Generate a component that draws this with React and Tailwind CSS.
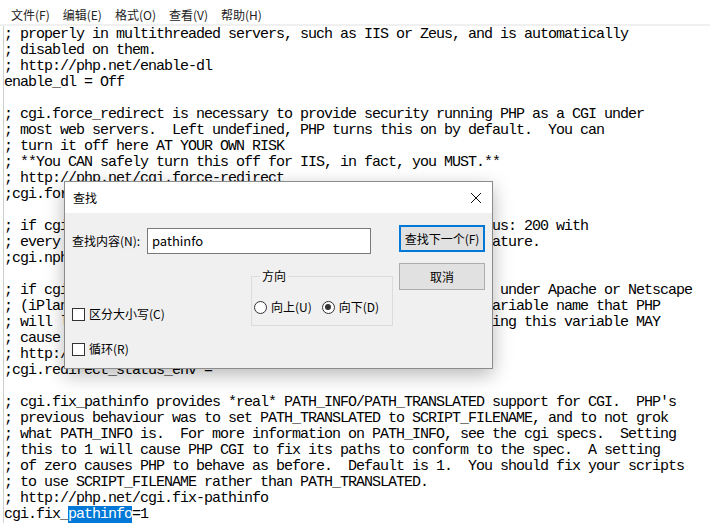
const lines = [
  "; properly in multithreaded servers, such as IIS or Zeus, and is automatically",
  "; disabled on them.",
  "; http://php.net/enable-dl",
  "enable_dl = Off",
  "",
  "; cgi.force_redirect is necessary to provide security running PHP as a CGI under",
  "; most web servers.  Left undefined, PHP turns this on by default.  You can",
  "; turn it off here AT YOUR OWN RISK",
  "; **You CAN safely turn this off for IIS, in fact, you MUST.**",
  "; http://php.net/cgi.force-redirect",
  ";cgi.force_redirect = 1",
  "",
  "; if cgi.nph is enabled it will force cgi to always sent Status: 200 with",
  "; every request. PHP's default behavior is to disable this feature.",
  ";cgi.nph = 1",
  "",
  "; if cgi.force_redirect is turned on, and you are not running under Apache or Netscape",
  "; (iPlanet) web servers, you MAY need to set an environment variable name that PHP",
  "; will look for to know it is OK to continue execution.  Setting this variable MAY",
  "; cause security issues, KNOW WHAT YOU ARE DOING FIRST.",
  "; http://php.net/cgi.redirect-status-env",
  ";cgi.redirect_status_env =",
  "",
  "; cgi.fix_pathinfo provides *real* PATH_INFO/PATH_TRANSLATED support for CGI.  PHP's",
  "; previous behaviour was to set PATH_TRANSLATED to SCRIPT_FILENAME, and to not grok",
  "; what PATH_INFO is.  For more information on PATH_INFO, see the cgi specs.  Setting",
  "; this to 1 will cause PHP CGI to fix its paths to conform to the spec.  A setting",
  "; of zero causes PHP to behave as before.  Default is 1.  You should fix your scripts",
  "; to use SCRIPT_FILENAME rather than PATH_TRANSLATED.",
  "; http://php.net/cgi.fix-pathinfo",
];

const menus = ["文件(F)", "编辑(E)", "格式(O)", "查看(V)", "帮助(H)"];

const ui = { fontFamily: '"Noto Sans CJK SC", "Noto Sans", sans-serif' };
const mono = { fontFamily: '"Liberation Mono", "Noto Sans CJK SC", monospace' };

function Checkbox({ label }) {
  return (
    <div className="flex items-center h-[16px]">
      <span className="w-[13px] h-[13px] border border-[#333] bg-white" />
      <span className="ml-[4px]">{label}</span>
    </div>
  );
}

function Radio({ label, checked }) {
  return (
    <div className="flex items-center h-[16px]">
      <span className="w-[13px] h-[13px] rounded-full border border-[#333] bg-white flex items-center justify-center">
        {checked && <span className="w-[6px] h-[6px] rounded-full bg-[#333]" />}
      </span>
      <span className="ml-[4px]">{label}</span>
    </div>
  );
}

function FindDialog() {
  return (
    <div
      className="absolute left-[64px] top-[181px] w-[429px] h-[188px] border border-[#8c8c8c] bg-[#f0f0f0] shadow-[0_6px_18px_rgba(0,0,0,0.28)] text-[12px] text-black"
      style={ui}
    >
      <div className="h-[31px] bg-white flex items-center justify-between pl-[8px] pr-[8px]">
        <span className="leading-[16px]">查找</span>
        <svg width="12" height="12" viewBox="0 0 12 12" className="mr-[2px]">
          <path d="M1 1L11 11M11 1L1 11" stroke="#111" strokeWidth="1" />
        </svg>
      </div>
      <div className="flex">
        <div className="flex-1 pl-[7px]">
          <div className="flex items-center mt-[15px]">
            <span className="w-[75px] leading-[16px]">查找内容(N):</span>
            <div className="w-[224px] h-[26px] bg-white border border-[#7a7a7a] flex items-center pl-[4px] text-[13px]">
              pathinfo
            </div>
          </div>
          <div className="flex items-start mt-[14px]">
            <div className="w-[179px] pt-[38px] flex flex-col gap-[19px]">
              <Checkbox label="区分大小写(C)" />
              <Checkbox label="循环(R)" />
            </div>
            <fieldset className="w-[142px] border border-[#dcdcdc] pl-[2px] pb-[10px]">
              <legend className="ml-[6px] px-[2px] leading-[16px]">方向</legend>
              <div className="flex items-center gap-[10px] pt-[15px]">
                <Radio label="向上(U)" />
                <Radio label="向下(D)" checked />
              </div>
            </fieldset>
          </div>
        </div>
        <div className="w-[86px] mr-[7px] pt-[12px] flex flex-col gap-[11px]">
          <div className="h-[27px] bg-[#e1e1e1] border-2 border-[#0078d7] flex items-center justify-center">
            查找下一个(F)
          </div>
          <div className="h-[27px] bg-[#e1e1e1] border border-[#adadad] flex items-center justify-center">
            取消
          </div>
        </div>
      </div>
    </div>
  );
}

export default function App() {
  return (
    <div className="relative w-[710px] h-[532px] bg-white overflow-hidden">
      <div className="h-[24px] pt-[7px] pl-[11px] flex gap-[13px] text-[12px] leading-[16px] text-[#222]" style={ui}>
        {menus.map((m) => (
          <span key={m}>{m}</span>
        ))}
      </div>
      <div className="h-[2px] bg-[#f0f0f0]" />
      <div
        className="ml-[3px] pt-[1px] border-l border-[#cfcfcf] text-[15px] tracking-[-1px] leading-[16px] text-black whitespace-pre"
        style={mono}
      >
        {lines.map((l, i) => (
          <div key={i} className="h-[16px]">{l}</div>
        ))}
        <div className="h-[16px]">
          cgi.fix_<span className="bg-[#0078d7] text-white">pathinfo</span>=1
        </div>
      </div>
      <FindDialog />
    </div>
  );
}
